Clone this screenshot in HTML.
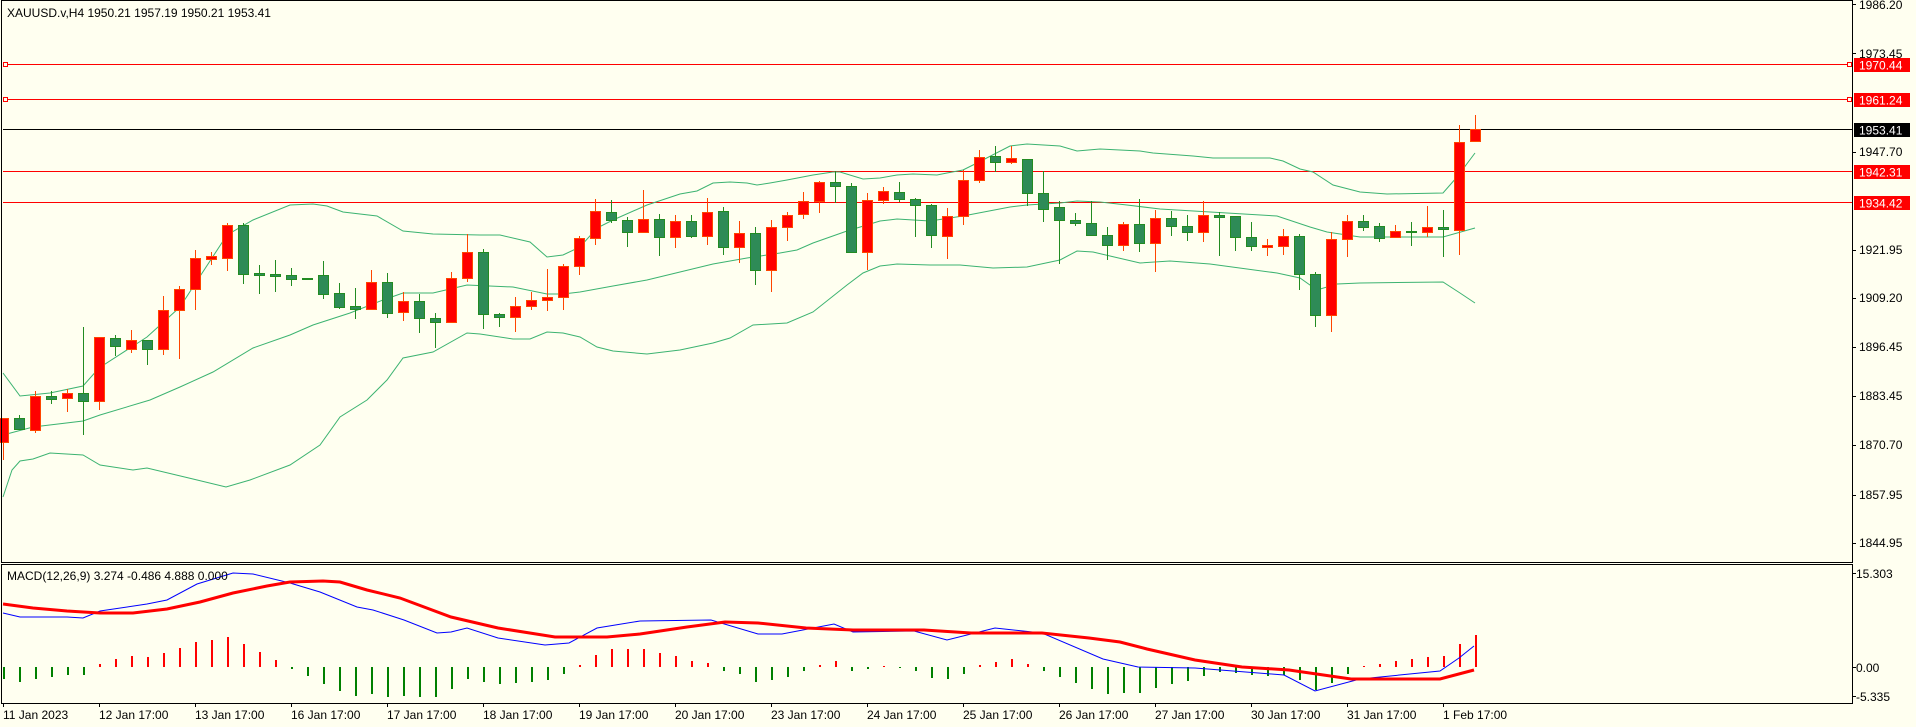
<!DOCTYPE html>
<html><head><meta charset="utf-8"><style>
html,body{margin:0;padding:0;background:#fffff0;width:1916px;height:727px;overflow:hidden}
svg{display:block}
text{font-family:"Liberation Sans",sans-serif;font-size:12px;fill:#000}
</style></head><body>
<svg width="1916" height="727" xmlns="http://www.w3.org/2000/svg">
<rect width="1916" height="727" fill="#fffff0"/>
<g id="h" stroke-width="1" shape-rendering="crispEdges" fill="none">
<line x1="3" y1="64.5" x2="1852" y2="64.5" stroke="#ff0000"/>
<line x1="3" y1="99.5" x2="1852" y2="99.5" stroke="#ff0000"/>
<line x1="3" y1="129.5" x2="1852" y2="129.5" stroke="#000"/>
<line x1="3" y1="171.5" x2="1852" y2="171.5" stroke="#ff0000"/>
<line x1="3" y1="202.5" x2="1852" y2="202.5" stroke="#ff0000"/>
<rect x="3.5" y="62.5" width="4" height="4" stroke="#ff0000" fill="#fffff0"/>
<rect x="3.5" y="97.5" width="4" height="4" stroke="#ff0000" fill="#fffff0"/>
<rect x="1847.5" y="62.5" width="4" height="4" stroke="#ff0000" fill="#fffff0"/>
<rect x="1847.5" y="97.5" width="4" height="4" stroke="#ff0000" fill="#fffff0"/>
</g>
<g fill="none" stroke="#3cb371" stroke-width="1">
<polyline points="3,373 20,396 50,393 83,386 99,368 147,337 180,307 193,287 227,235 253,220 290,205 313,204 327,206 343,212 377,216 403,231 433,234 480,235 500,235 530,242 547,257 563,255 580,247 597,228 613,220 647,205 680,194 697,191 713,183 730,182 747,183 757,185 770,183 787,180 813,175 833,172 840,172 863,179 880,178 897,175 913,174 937,175 947,173 963,170 977,163 1010,146 1027,144 1060,146 1077,151 1100,149 1140,151 1153,153 1193,156 1213,158 1270,158 1283,161 1300,169 1313,172 1333,185 1360,192 1387,194 1443,193 1457,177 1475,153"/>
<polyline points="3,435 33,427 83,421 100,415 150,400 180,387 213,372 253,348 290,335 313,325 350,313 383,300 403,293 433,293 467,285 513,287 547,294 563,294 580,292 613,286 647,280 680,272 713,264 747,258 780,253 797,250 813,243 847,231 880,221 897,219 930,221 963,216 1010,207 1027,205 1060,203 1077,201 1100,202 1127,205 1160,209 1227,213 1277,216 1310,227 1327,232 1360,237 1443,237 1475,228"/>
<polyline points="3,497 12,470 20,461 33,459 50,453 83,455 100,465 133,470 147,468 193,479 226,487 250,480 290,465 320,445 340,417 367,400 387,380 403,358 433,352 467,333 480,334 513,339 530,339 547,332 563,333 580,337 597,347 613,351 647,354 680,350 713,343 730,338 753,325 787,323 813,312 847,285 863,273 880,266 897,264 930,265 960,265 993,268 1027,267 1060,260 1077,251 1093,252 1110,256 1140,263 1170,261 1210,264 1277,273 1300,278 1317,290 1337,284 1360,283 1443,282 1460,293 1475,303"/>
</g>
<g id="candles" shape-rendering="crispEdges"></g>
<g id="hist" shape-rendering="crispEdges"></g>
<g fill="none">
<polyline stroke="#0000ff" stroke-width="1" points="3,613 20,617 67,617 83,618 100,611 147,604 167,600 197,584 233,573 253,574 290,583 320,592 357,607 373,610 404,620 437,633 451,632 467,628 498,638 545,645 569,643 597,628 640,621 711,620 758,634 782,634 834,624 853,632 914,631 947,640 995,628 1042,633 1103,659 1138,667 1195,668 1284,675 1315,691 1360,679 1440,671 1459,658 1474,646"/>
<polyline stroke="#ff0000" stroke-width="3" points="3,604 33,608 67,611 100,613 133,613 167,609 200,602 233,593 267,586 290,582 323,581 340,582 367,590 400,598 451,617 498,628 555,637 607,637 640,634 687,627 725,622 758,623 806,628 853,630 924,630 971,633 1042,633 1089,638 1120,642 1147,649 1195,660 1242,667 1289,670 1351,679 1440,679 1474,670"/>
</g>
<g fill="none" stroke="#000" stroke-width="1" shape-rendering="crispEdges">
<rect x="1.5" y="0.5" width="1851" height="562"/>
<rect x="1.5" y="564.5" width="1851" height="139"/>
<path d="M1852 4.5h4M1852 53.5h4M1852 152.5h4M1852 250.5h4M1852 298.5h4M1852 347.5h4M1852 396.5h4M1852 445.5h4M1852 495.5h4M1852 543.5h4M1852 573.5h4M1852 667.5h4M1852 696.5h4"/>
<path d="M3.5 703v4M99.5 703v4M195.5 703v4M291.5 703v4M387.5 703v4M483.5 703v4M579.5 703v4M675.5 703v4M771.5 703v4M867.5 703v4M963.5 703v4M1059.5 703v4M1155.5 703v4M1251.5 703v4M1347.5 703v4M1443.5 703v4"/>
</g>
<text x="7" y="17">XAUUSD.v,H4  1950.21 1957.19 1950.21 1953.41</text>
<text x="7" y="580">MACD(12,26,9) 3.274 -0.486 4.888 0.000</text>
<g>
<text x="1859" y="9">1986.20</text>
<text x="1859" y="58">1973.45</text>
<text x="1859" y="156">1947.70</text>
<text x="1859" y="254">1921.95</text>
<text x="1859" y="302">1909.20</text>
<text x="1859" y="351">1896.45</text>
<text x="1859" y="400">1883.45</text>
<text x="1859" y="449">1870.70</text>
<text x="1859" y="499">1857.95</text>
<text x="1859" y="547">1844.95</text>
<rect x="1854" y="58" width="56" height="14" fill="#ff0000"/><text x="1859" y="69.5" style="fill:#fff">1970.44</text>
<rect x="1854" y="93" width="56" height="14" fill="#ff0000"/><text x="1859" y="104.5" style="fill:#fff">1961.24</text>
<rect x="1854" y="123" width="56" height="14" fill="#000"/><text x="1859" y="134.5" style="fill:#fff">1953.41</text>
<rect x="1854" y="165" width="56" height="14" fill="#ff0000"/><text x="1859" y="176.5" style="fill:#fff">1942.31</text>
<rect x="1854" y="196" width="56" height="14" fill="#ff0000"/><text x="1859" y="207.5" style="fill:#fff">1934.42</text>
<text x="1856" y="578">15.303</text>
<text x="1856" y="672">0.00</text>
<text x="1856" y="701">-5.335</text>
</g>
<g>
<text x="3" y="719">11 Jan 2023</text>
<text x="99" y="719">12 Jan 17:00</text>
<text x="195" y="719">13 Jan 17:00</text>
<text x="291" y="719">16 Jan 17:00</text>
<text x="387" y="719">17 Jan 17:00</text>
<text x="483" y="719">18 Jan 17:00</text>
<text x="579" y="719">19 Jan 17:00</text>
<text x="675" y="719">20 Jan 17:00</text>
<text x="771" y="719">23 Jan 17:00</text>
<text x="867" y="719">24 Jan 17:00</text>
<text x="963" y="719">25 Jan 17:00</text>
<text x="1059" y="719">26 Jan 17:00</text>
<text x="1155" y="719">27 Jan 17:00</text>
<text x="1251" y="719">30 Jan 17:00</text>
<text x="1347" y="719">31 Jan 17:00</text>
<text x="1443" y="719">1 Feb 17:00</text>
</g>
</svg>
<script>
var C=[
"R 418 442 418 459","G 418 429 415 429","R 396 430 391 432","G 396 399 391 403","R 393 398 389 411","G 393 401 327 434","R 337 401 337 409","G 338 346 335 355","R 340 349 330 352","G 340 349 340 364",
"R 310 349 296 354","R 289 310 286 358","R 258 289 250 309","R 256 259 252 264","R 225 258 223 270","G 225 274 223 283","G 273 275 265 293","G 274 276 260 291","G 275 279 268 285","G 278 279 278 279",
"G 275 294 261 298","G 293 307 283 308","G 306 309 288 318","R 282 309 270 309","G 282 313 273 317","R 301 312 292 320","G 301 318 294 332","G 318 322 313 347","R 278 322 272 322","R 252 278 234 281",
"G 252 314 249 328","G 314 317 313 326","R 306 317 297 331","R 300 306 292 309","R 297 300 269 310","R 266 297 264 309","R 238 266 236 274","R 211 238 199 244","G 212 220 200 222","G 220 232 217 246",
"R 219 232 190 232","G 219 237 214 255","R 221 237 215 247","G 221 236 215 237","R 212 236 198 244","G 211 247 207 254","R 233 247 221 262","G 233 270 227 284","R 227 270 220 291","R 215 227 212 240",
"R 201 214 192 218","R 182 201 181 212","G 182 186 171 202","G 186 252 183 252","R 200 252 193 269","R 191 200 187 203","G 192 199 182 201","G 199 205 198 236","G 205 235 204 247","R 216 236 208 258",
"R 180 216 170 224","R 157 180 150 182","G 156 162 146 171","R 158 162 146 163","G 159 193 159 205","G 193 209 171 221","G 207 220 201 263","G 220 223 213 225","G 223 235 201 235","G 235 245 227 259",
"R 224 245 222 250","G 224 243 199 251","R 218 243 210 271","G 218 226 211 235","G 226 232 215 240","R 215 232 201 241","G 215 217 212 255","G 216 237 216 250","G 237 246 222 250","R 245 247 239 255",
"R 236 246 229 254","G 236 274 234 289","G 274 315 272 326","R 239 315 232 331","R 221 239 215 256","G 221 227 215 230","G 226 238 223 241","R 231 237 225 237","G 231 232 222 245","R 227 232 206 236",
"G 227 229 210 256","R 142 230 125 254","R 129 141 115 141"];
var H=[679,682,679,677,675,675,664,659,656,657,653,648,642,640,637,644,652,660,669,676,684,691,696,694,697,696,697,697,689,679,682,684,683,682,680,674,665,655,649,649,649,653,656,661,663,671,674,682,680,677,671,665,661,671,669,666,668,671,678,679,674,665,662,659,664,671,677,683,689,694,693,693,688,684,681,676,672,673,675,676,675,680,690,683,674,666,664,661,659,657,656,644,635];
var ns="http://www.w3.org/2000/svg",g=document.getElementById("candles"),h=document.getElementById("hist");
function el(p,t,a){var e=document.createElementNS(ns,t);for(var k in a)e.setAttribute(k,a[k]);p.appendChild(e);}
C.forEach(function(s,i){var p=s.split(" "),c=3+16*i,t=+p[1],b=+p[2],hi=+p[3],lo=+p[4];
var red=p[0]=="R",st=red?"#ff4500":"#228b22",fl=red?"#ff0000":"#2e8b57";
el(g,"line",{x1:c+0.5,y1:hi,x2:c+0.5,y2:lo+1,stroke:st,"stroke-width":1});
if(b-t<2){el(g,"rect",{x:c-5,y:t,width:11,height:2,fill:st});}
else el(g,"rect",{x:c-4.5,y:t+0.5,width:10,height:b-t,fill:fl,stroke:st,"stroke-width":1});});
H.forEach(function(v,i){var c=3+16*i;var up=v<667;
el(h,"rect",{x:c,y:up?v:667,width:2,height:Math.max(Math.abs(v-667),1),fill:up?"#ff0000":"#008000"});});
</script>
</body></html>
